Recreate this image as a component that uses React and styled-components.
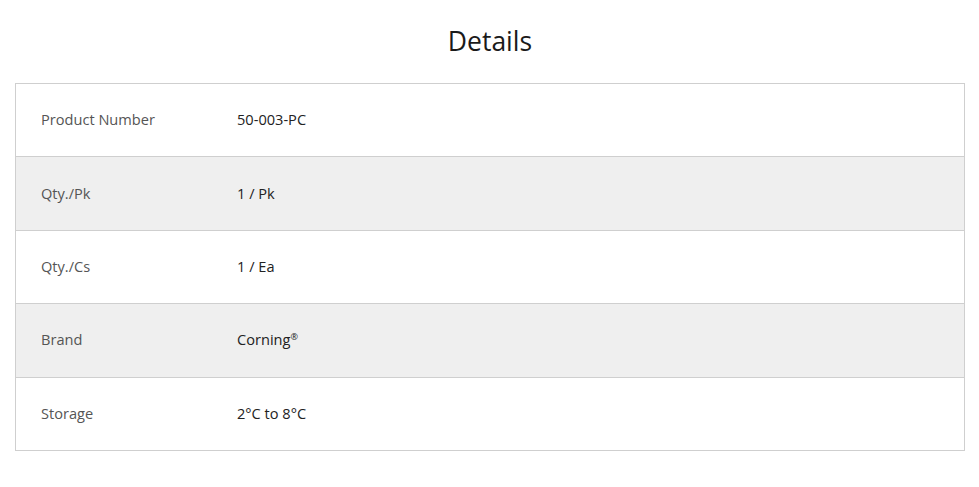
import React from 'react';
import styled, { createGlobalStyle } from 'styled-components';

const GlobalStyle = createGlobalStyle`
  body {
    margin: 0;
    background: #fff;
    font-family: "Open Sans", "Noto Sans", sans-serif;
  }
`;

const Page = styled.div`
  padding: 0 14px 0 15px;
`;

const Title = styled.h2`
  margin: 0;
  height: 83px;
  display: flex;
  align-items: center;
  justify-content: center;
  font-size: 26.5px;
  font-weight: 400;
  color: #1a1a1a;
  padding-bottom: 1px;
  box-sizing: border-box;
`;

const Table = styled.div`
  border: 1px solid #cfcfcf;
`;

const Row = styled.div`
  display: grid;
  grid-template-columns: 196px 1fr;
  align-items: center;
  height: 72.4px;
  padding-left: 25px;
  padding-bottom: 2px;
  box-sizing: border-box;
  background: ${(p) => (p.$striped ? '#efefef' : '#fff')};
  & + & {
    border-top: 1px solid #cfcfcf;
    height: 73.4px;
  }
`;

const Label = styled.span`
  font-size: 14.6px;
  color: #555;
`;

const Value = styled.span`
  font-size: 14.6px;
  color: #222;
`;

const Mark = styled.sup`
  font-size: 9px;
  vertical-align: 5px;
  line-height: 0;
`;

const rows = [
  ['Product Number', '50-003-PC'],
  ['Qty./Pk', '1 / Pk'],
  ['Qty./Cs', '1 / Ea'],
  ['Brand', <>Corning<Mark>®</Mark></>],
  ['Storage', '2°C to 8°C'],
];

const App = () => (
  <Page>
    <GlobalStyle />
    <Title>Details</Title>
    <Table>
      {rows.map(([label, value], i) => (
        <Row key={label} $striped={i % 2 === 1}>
          <Label>{label}</Label>
          <Value>{value}</Value>
        </Row>
      ))}
    </Table>
  </Page>
);

export default App;
